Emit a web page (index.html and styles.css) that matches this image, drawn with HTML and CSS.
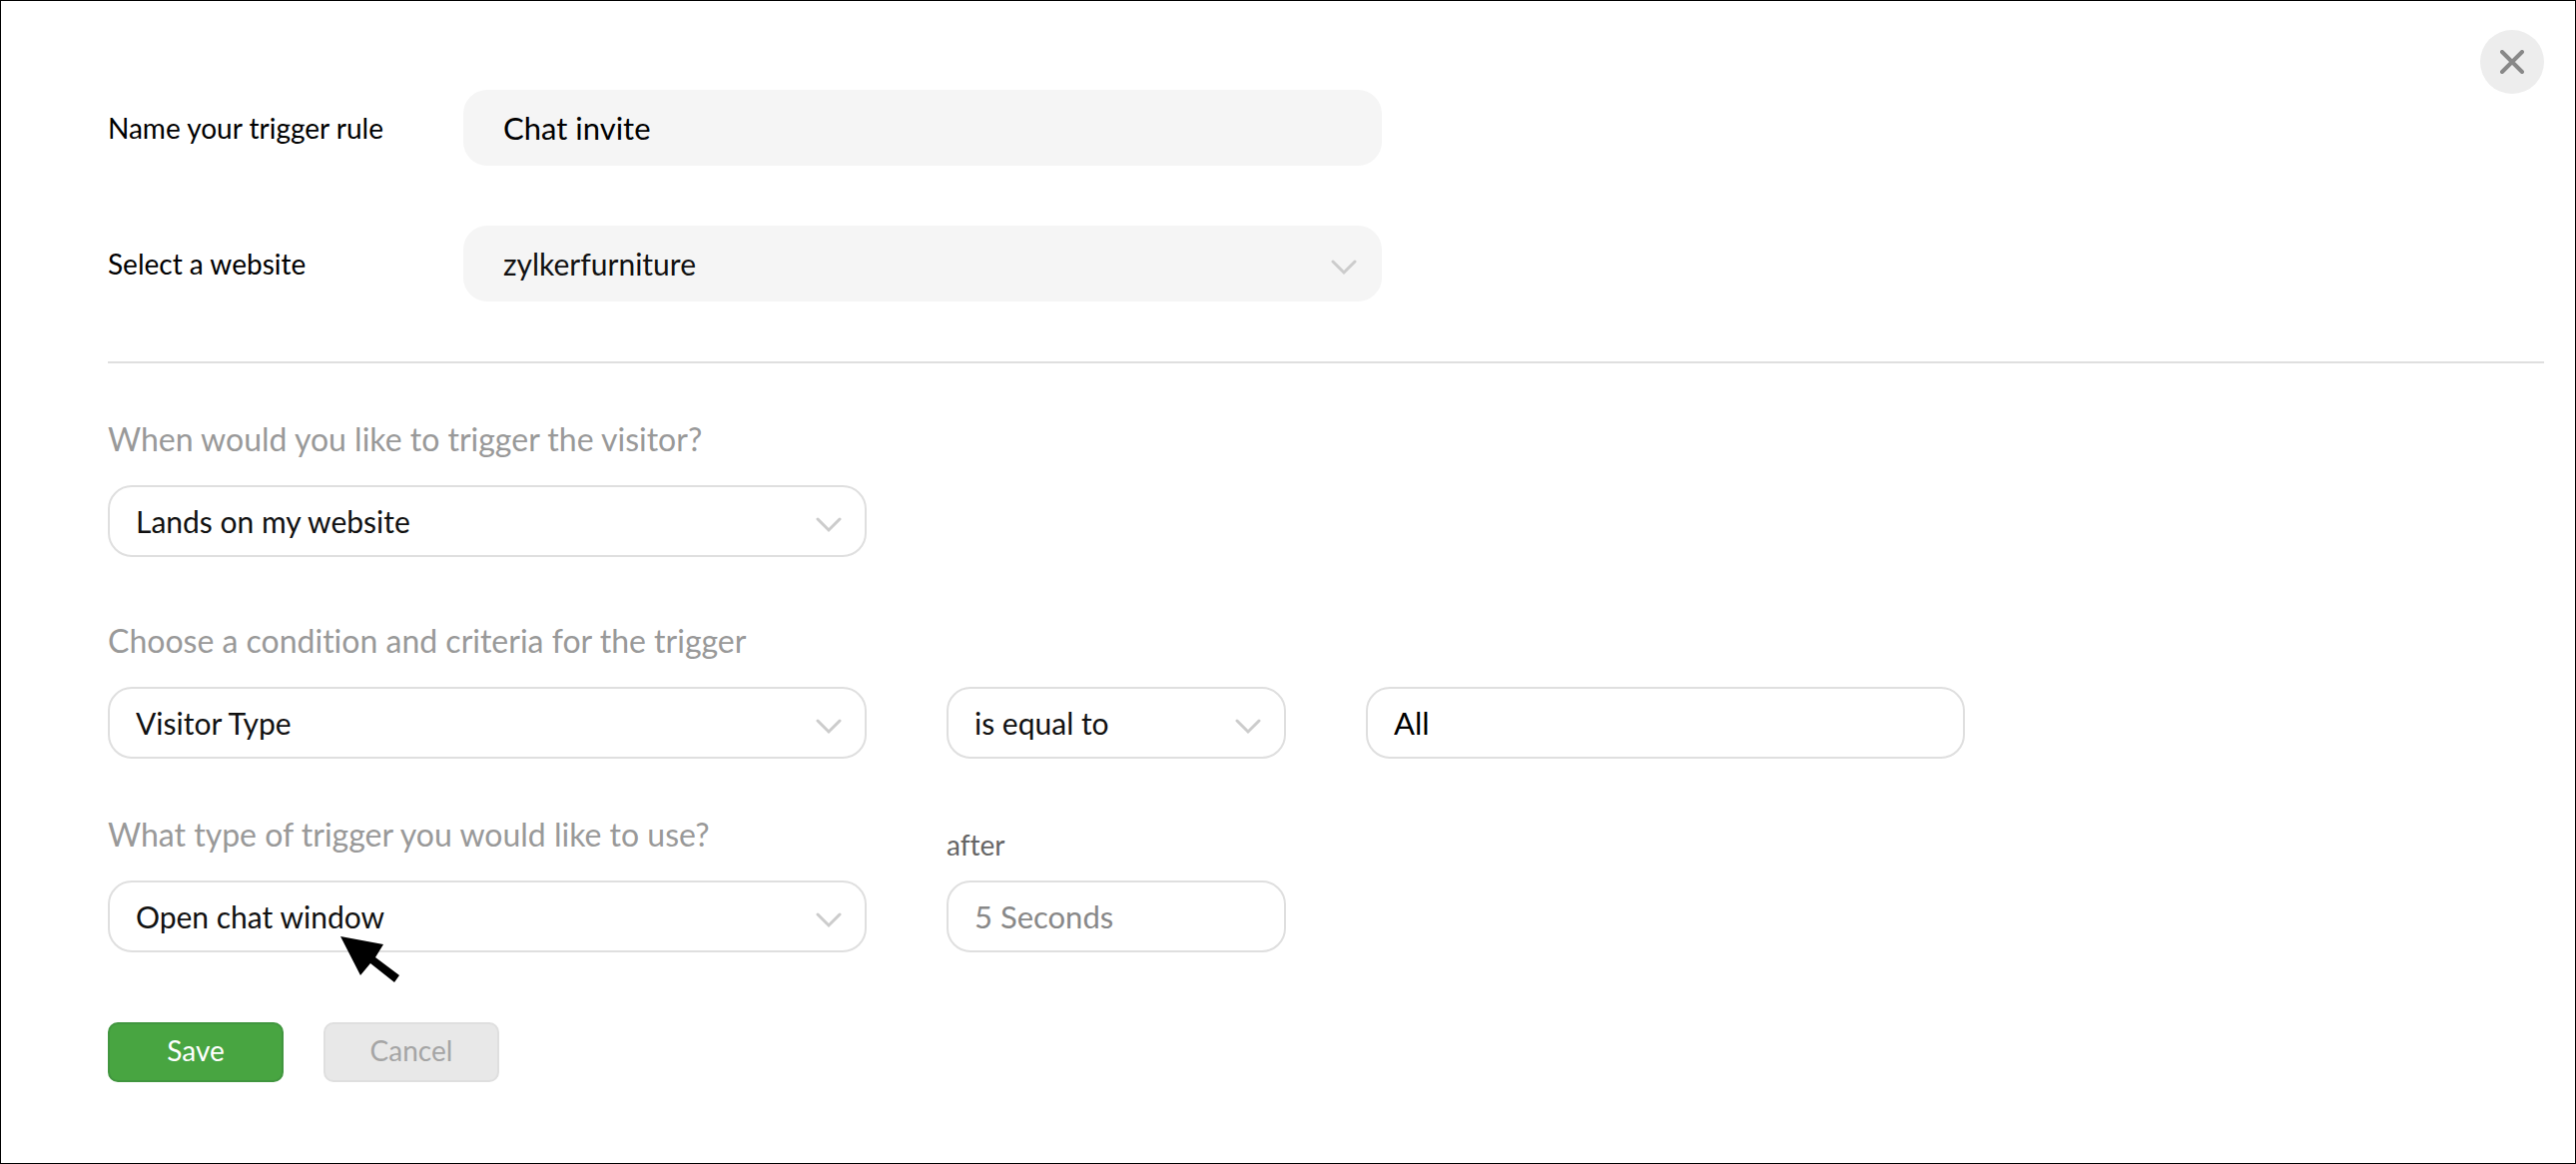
FILE: index.html
```html
<!DOCTYPE html>
<html lang="en">
<head>
    <meta charset="UTF-8">
    <meta name="viewport" content="width=device-width, initial-scale=1.0">
    <title>Trigger rule</title>
    <link rel="stylesheet" href="styles.css">
</head>
<body>

    <main class="panel">
        <button type="button" class="close-btn" aria-label="Close">
            <svg width="24" height="24" viewBox="0 0 24 24"><path d="M2 2L22 22M22 2L2 22"/></svg>
        </button>

        <form class="trigger-form">
            <!-- Rule name and website -->
            <div class="rule-info">
                <div class="info-row">
                    <label for="ruleName">Name your trigger rule</label>
                    <input type="text" id="ruleName" class="control filled" value="Chat invite">
                </div>
                <div class="info-row">
                    <label for="website">Select a website</label>
                    <div class="select-box filled-box">
                        <select id="website" class="control filled">
                            <option>zylkerfurniture</option>
                        </select>
                        <svg class="chevron" width="26" height="16" viewBox="0 0 26 16"><path d="M2 2L13 13L24 2"/></svg>
                    </div>
                </div>
            </div>

            <!-- Event -->
            <div class="field-row">
                <div class="field field-lg">
                    <label for="event">When would you like to trigger the visitor?</label>
                    <div class="select-box">
                        <select id="event" class="control">
                            <option>Lands on my website</option>
                        </select>
                        <svg class="chevron" width="26" height="16" viewBox="0 0 26 16"><path d="M2 2L13 13L24 2"/></svg>
                    </div>
                </div>
            </div>

            <!-- Condition -->
            <div class="field-row condition-row">
                <div class="field field-lg">
                    <label for="condition">Choose a condition and criteria for the trigger</label>
                    <div class="select-box">
                        <select id="condition" class="control">
                            <option>Visitor Type</option>
                        </select>
                        <svg class="chevron" width="26" height="16" viewBox="0 0 26 16"><path d="M2 2L13 13L24 2"/></svg>
                    </div>
                </div>
                <div class="field field-sm">
                    <div class="select-box">
                        <select class="control" aria-label="Operator">
                            <option>is equal to</option>
                        </select>
                        <svg class="chevron" width="26" height="16" viewBox="0 0 26 16"><path d="M2 2L13 13L24 2"/></svg>
                    </div>
                </div>
                <div class="field field-md">
                    <input type="text" class="control" aria-label="Criteria" value="All">
                </div>
            </div>

            <!-- Action -->
            <div class="field-row">
                <div class="field field-lg">
                    <label for="action">What type of trigger you would like to use?</label>
                    <div class="select-box">
                        <select id="action" class="control">
                            <option>Open chat window</option>
                        </select>
                        <svg class="chevron" width="26" height="16" viewBox="0 0 26 16"><path d="M2 2L13 13L24 2"/></svg>
                        <svg class="pointer" width="60" height="46" viewBox="0 0 60 46"><path d="M0 0L43 8L35 21L59 39L54 46L30 27L20 39Z"/></svg>
                    </div>
                </div>
                <div class="field field-sm delay">
                    <label for="delay">after</label>
                    <input type="text" id="delay" class="control" placeholder="5 Seconds">
                </div>
            </div>

            <div class="actions">
                <button type="submit" class="btn btn-save">Save</button>
                <button type="button" class="btn btn-cancel">Cancel</button>
            </div>
        </form>
    </main>

</body>
</html>
```
FILE: styles.css
```css
:root {
    --border: #dfdfdf;
    --fill: #f5f5f5;
    --muted: #999;
    --green: #48a541;
}

* {
    margin: 0;
    padding: 0;
    box-sizing: border-box;
    font-family: Lato, "Open Sans", sans-serif;
    font-variant-ligatures: none;
}

body {
    background-color: #fff;
    color: #000;
}

.panel {
    position: relative;
    min-height: 100vh;
    padding: 89px 31px 80px 107px;
    border: 1px solid #000;
}

/* Close button */
.close-btn {
    position: absolute;
    top: 29px;
    right: 31px;
    display: flex;
    align-items: center;
    justify-content: center;
    width: 64px;
    height: 64px;
    border: none;
    border-radius: 50%;
    background-color: #ededed;
    cursor: pointer;
}

.close-btn svg {
    stroke: #888;
    stroke-width: 4;
    stroke-linecap: round;
}

/* Controls */
.control {
    display: block;
    width: 100%;
    height: 72px;
    padding: 0 26px;
    border: 2px solid var(--border);
    border-radius: 24px;
    background-color: #fff;
    color: #000;
    font-size: 31px;
    outline: none;
    appearance: none;
}

select.control {
    padding-right: 64px;
    color: #111;
    font-size: 30px;
}

.control::placeholder {
    color: #888;
}

.filled {
    height: 76px;
    padding: 0 40px;
    border: none;
    background-color: var(--fill);
}

.select-box {
    position: relative;
}

.chevron {
    position: absolute;
    top: 32px;
    right: 25px;
    fill: none;
    stroke: #ccc;
    stroke-width: 3;
    stroke-linecap: round;
    pointer-events: none;
}

.filled-box .chevron {
    top: 34px;
}

/* Rule name and website */
.rule-info {
    display: flex;
    flex-direction: column;
    gap: 60px;
    padding-bottom: 60px;
    border-bottom: 2px solid var(--border);
}

.info-row {
    display: grid;
    grid-template-columns: 356px minmax(0, 920px);
    align-items: center;
    font-size: 28px;
}

/* Trigger settings */
.field-row {
    display: flex;
    align-items: flex-end;
    gap: 80px;
    margin-top: 56px;
}

.condition-row {
    margin-top: 64px;
}

.field {
    display: flex;
    flex-direction: column;
    gap: 26px;
    min-width: 0;
}

.field label {
    color: var(--muted);
    font-size: 32px;
    line-height: 40px;
}

.field-lg {
    flex: 0 1 760px;
}

.field-md {
    flex: 0 1 600px;
}

.field-sm {
    flex: 0 1 340px;
}

.delay {
    gap: 16px;
}

.delay label {
    color: #666;
    font-size: 28px;
}

.pointer {
    position: absolute;
    top: 56px;
    left: 233px;
    pointer-events: none;
}

/* Buttons */
.actions {
    display: flex;
    gap: 40px;
    margin-top: 70px;
}

.btn {
    width: 176px;
    height: 60px;
    padding-bottom: 4px;
    border: 2px solid var(--border);
    border-radius: 10px;
    font-size: 28px;
    cursor: pointer;
}

.btn-save {
    background-color: var(--green);
    border-color: #41963f;
    color: #fff;
}

.btn-cancel {
    background-color: #e8e8e8;
    color: #a5a5a5;
}
```
